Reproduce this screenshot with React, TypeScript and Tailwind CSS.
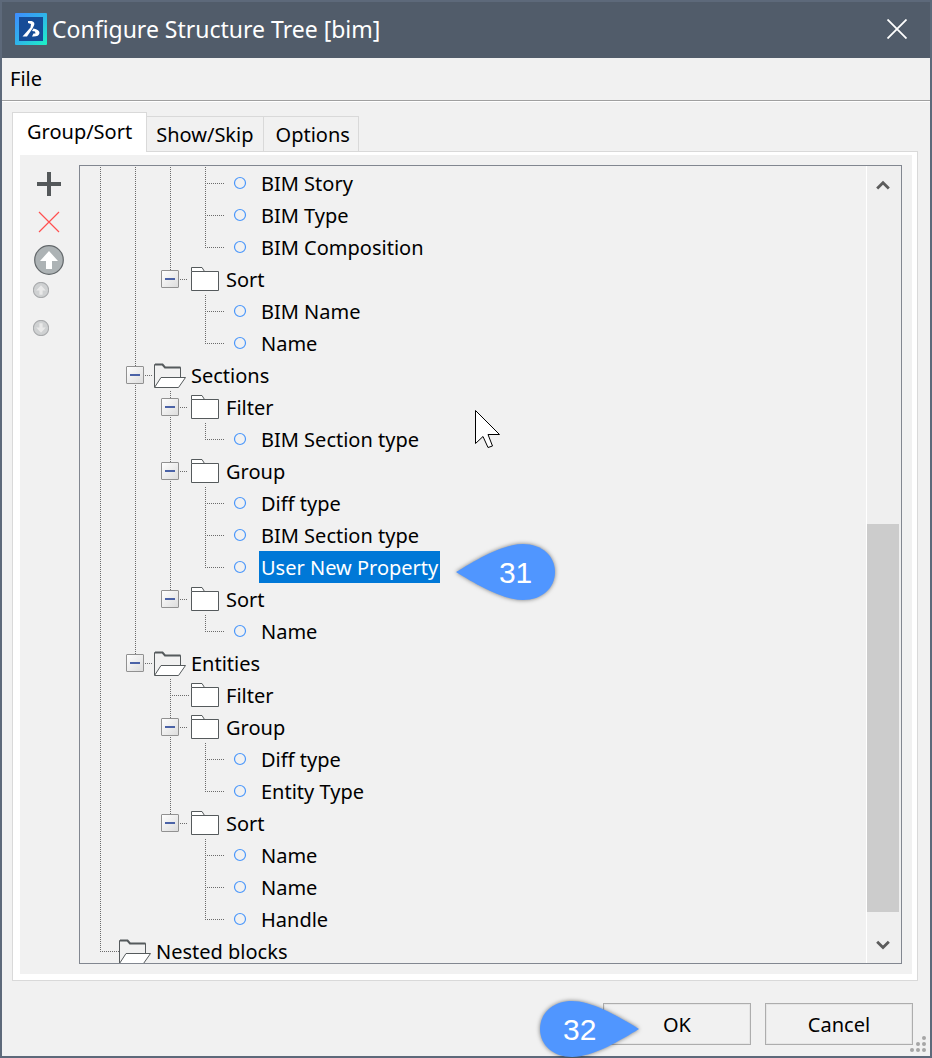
import { useState } from "react";

type Icon = "leaf" | "folder" | "open";

interface Row {
  // one character per indent column:
  // "|" line, "T" tee, "L" corner, "B" box with line going on, "b" last box, " " empty
  guides: string;
  icon: Icon;
  label: string;
  callout?: string;
}

const rows: Row[] = [
  { guides: "|||T", icon: "leaf", label: "BIM Story" },
  { guides: "|||T", icon: "leaf", label: "BIM Type" },
  { guides: "|||L", icon: "leaf", label: "BIM Composition" },
  { guides: "||b", icon: "folder", label: "Sort" },
  { guides: "|| T", icon: "leaf", label: "BIM Name" },
  { guides: "|| L", icon: "leaf", label: "Name" },
  { guides: "|B", icon: "open", label: "Sections" },
  { guides: "||B", icon: "folder", label: "Filter" },
  { guides: "|||L", icon: "leaf", label: "BIM Section type" },
  { guides: "||B", icon: "folder", label: "Group" },
  { guides: "|||T", icon: "leaf", label: "Diff type" },
  { guides: "|||T", icon: "leaf", label: "BIM Section type" },
  { guides: "|||L", icon: "leaf", label: "User New Property", callout: "31" },
  { guides: "||b", icon: "folder", label: "Sort" },
  { guides: "|| L", icon: "leaf", label: "Name" },
  { guides: "|b", icon: "open", label: "Entities" },
  { guides: "| T", icon: "folder", label: "Filter" },
  { guides: "| B", icon: "folder", label: "Group" },
  { guides: "| |T", icon: "leaf", label: "Diff type" },
  { guides: "| |L", icon: "leaf", label: "Entity Type" },
  { guides: "| b", icon: "folder", label: "Sort" },
  { guides: "|  T", icon: "leaf", label: "Name" },
  { guides: "|  T", icon: "leaf", label: "Name" },
  { guides: "|  L", icon: "leaf", label: "Handle" },
  { guides: "L", icon: "open", label: "Nested blocks" },
];

const Guide = ({ kind }: { kind: string }) => {
  const isBox = kind === "B" || kind === "b";
  const toBottom = kind === "|" || kind === "T" || kind === "B";
  const drawing = (
    <svg className="block h-8 w-[35px] overflow-visible" viewBox="0 0 35 32" fill="none">
      {kind !== " " && (
        <path
          d={toBottom ? "M17.5 0V32" : "M17.5 0V17"}
          stroke="#6b6b6b"
          strokeDasharray="1 1"
          shapeRendering="crispEdges"
        />
      )}
      {kind !== " " && kind !== "|" && (
        <path
          d={isBox ? "M18 16.5H35" : "M18 16.5H37"}
          stroke="#6b6b6b"
          strokeDasharray="1 1"
          strokeDashoffset="1"
          shapeRendering="crispEdges"
        />
      )}
      {isBox && (
        <>
          <defs>
            <linearGradient id="boxFill" x1="0" y1="0" x2="1" y2="1">
              <stop offset="0" stopColor="#ffffff" />
              <stop offset="1" stopColor="#dcdcdc" />
            </linearGradient>
          </defs>
          <rect x="8.5" y="7.5" width="17" height="17" rx="0.5" fill="url(#boxFill)" stroke="#919191" />
          <path d="M12 16H22" stroke="#4b63a7" strokeWidth="2" />
        </>
      )}
    </svg>
  );

  if (isBox) {
    return (
      <button aria-label="Collapse" className="shrink-0">
        {drawing}
      </button>
    );
  }
  return <span className="shrink-0">{drawing}</span>;
};

const NodeIcon = ({ icon }: { icon: Icon }) => (
  <svg className="block h-8 w-[35px] shrink-0" viewBox="0 0 35 32" fill="none">
    {icon === "leaf" && <circle cx="17" cy="16" r="5.5" stroke="#4a97fb" strokeWidth="1.2" />}
    {icon === "folder" && (
      <g stroke="#555a5c" fill="#fff">
        <path d="M3.5 8.5V4.5H14L16.5 8.5" />
        <path d="M3.5 8.5H30.5V27.5H3.5Z" />
      </g>
    )}
    {icon === "open" && (
      <g stroke="#555a5c">
        <path d="M1.5 28V5.5H9.5L12 8.5H27.5V18.5" />
        <path d="M2 5.5H9.5L12 8.5H27.5" strokeWidth="2" />
        <path d="M1.5 28.5L8 18.5H32.5L25.5 28.5Z" fill="#fff" />
      </g>
    )}
  </svg>
);

const Callout = ({ text, flip = false }: { text: string; flip?: boolean }) => (
  <span className="relative block h-[58px] w-[100px]">
    <svg className="absolute inset-0 h-full w-full overflow-visible drop-shadow-[0_0_2px_rgba(0,0,0,0.5)]" viewBox="0 0 100 58">
      <path
        d="M0 29C18 18 46 1 67 1C86 1 99 13 99 29C99 45 86 57 67 57C46 57 18 40 0 29Z"
        fill="#5096ff"
        transform={flip ? "matrix(-1 0 0 1 100 0)" : undefined}
      />
    </svg>
    <span
      className={`absolute inset-y-0 flex items-center font-['Liberation_Sans',sans-serif] text-[30px] text-white ${
        flip ? "left-6" : "right-6"
      }`}
    >
      {text}
    </span>
  </span>
);

const RoundArrow = ({ down = false, large = false }: { down?: boolean; large?: boolean }) => (
  <svg className={large ? "size-[30px]" : "size-4"} viewBox="0 0 30 30">
    <circle cx="15" cy="15" r="14.3" fill={large ? "#adb3b5" : "#cfd1d2"} stroke={large ? "#62676a" : "#a9abad"} strokeWidth={large ? 1.2 : 2} />
    <path
      d="M15 6L24 16H18V24H12V16H6Z"
      fill={large ? "#fff" : "#e9e9e9"}
      transform={down ? "rotate(180 15 15)" : undefined}
    />
  </svg>
);

const Toolbar = () => (
  <div className="flex w-[59px] shrink-0 flex-col items-start">
    <button aria-label="Add" className="flex h-[38px] w-[58px] items-center justify-center">
      <svg className="size-6" viewBox="0 0 24 24">
        <path d="M0 12H24M12 0V24" stroke="#54585a" strokeWidth="4" />
      </svg>
    </button>
    <button aria-label="Delete" className="flex h-[38px] w-[58px] items-center justify-center">
      <svg className="size-[22px]" viewBox="0 0 22 22">
        <path d="M1 1L21 21M21 1L1 21" stroke="#ff5050" strokeWidth="1.2" />
      </svg>
    </button>
    <button aria-label="Move to parent" className="flex h-[38px] w-[58px] items-center justify-center">
      <RoundArrow large />
    </button>
    <button aria-label="Move up" disabled className="ml-2.5 flex size-[22px] items-center justify-center">
      <RoundArrow />
    </button>
    <button aria-label="Move down" disabled className="mt-4 ml-2.5 flex size-[22px] items-center justify-center">
      <RoundArrow down />
    </button>
  </div>
);

const Scrollbar = () => (
  <div className="flex w-[35px] shrink-0 flex-col border-l border-white bg-[#efefef] pr-0.5">
    <button aria-label="Scroll up" className="flex h-[38px] items-center justify-center">
      <svg className="size-3.5" viewBox="0 0 12 12" fill="none">
        <path d="M1 9L6 4L11 9" stroke="#5c5c5c" strokeWidth="2.4" />
      </svg>
    </button>
    <div className="grow-[320]" />
    <div className="grow-[388] bg-[#cccccc]" />
    <div className="grow-[13]" />
    <button aria-label="Scroll down" className="flex h-[38px] items-center justify-center">
      <svg className="size-3.5" viewBox="0 0 12 12" fill="none">
        <path d="M1 4L6 9L11 4" stroke="#5c5c5c" strokeWidth="2.4" />
      </svg>
    </button>
  </div>
);

const Tree = () => {
  const [selected, setSelected] = useState(12);

  return (
    <div className="relative flex min-h-0 flex-1 border border-[#828790]">
      <ul className="min-h-0 flex-1 overflow-hidden pt-px pl-[3px]">
        {rows.map((row, index) => (
          <li key={index} className="flex h-8">
            {row.guides.split("").map((kind, i) => (
              <Guide key={i} kind={kind} />
            ))}
            <NodeIcon icon={row.icon} />
            <div className="relative ml-px">
              <button
                onClick={() => setSelected(index)}
                className={`h-8 px-0.5 pt-0.5 leading-[30px] whitespace-nowrap ${selected === index ? "bg-[#0078d7] text-white" : ""}`}
              >
                {row.label}
              </button>
              {row.callout && (
                <div className="pointer-events-none absolute top-1/2 left-full ml-4 -translate-y-6">
                  <Callout text={row.callout} />
                </div>
              )}
            </div>
          </li>
        ))}
      </ul>
      <Scrollbar />
      {/* Mouse pointer */}
      <svg className="pointer-events-none absolute top-[244px] left-[395px] h-10 w-[26px]" viewBox="0 0 26 40">
        <path d="M0.5 0.5V33.5L8 26.5L13 37.5L17.5 36L13 24.5H24.5Z" fill="#fff" stroke="#000" />
      </svg>
    </div>
  );
};

const tabs = ["Group/Sort", "Show/Skip", "Options"];

export default function App() {
  const [activeTab, setActiveTab] = useState(tabs[0]);

  return (
    <div className="flex h-screen flex-col border-2 border-[#5d697a] bg-[#f1f1f1] font-['Noto_Sans',sans-serif] text-[20px] text-black">
      {/* Title bar */}
      <header className="flex h-14 shrink-0 items-center bg-[#515c6a] pb-0.5 pl-[13px] text-white">
        <svg className="size-8" viewBox="0 0 32 32" fill="none">
          <defs>
            <linearGradient id="logo" x1="0" y1="0" x2="1" y2="1">
              <stop offset="0" stopColor="#3f8cff" />
              <stop offset="0.5" stopColor="#2fb4ea" />
              <stop offset="1" stopColor="#1cf5c4" />
            </linearGradient>
          </defs>
          <rect width="32" height="32" rx="1" fill="url(#logo)" />
          <rect x="4" y="4" width="24" height="24" fill="#164c97" />
          <path d="M13 8H16.5Q20.5 9 19 12.5L17.5 15.5L12 23.5H7.5L15.5 14.5L16 11L13 10Z" fill="#fff" />
          <path d="M18.5 15.5Q24.5 16.5 24.5 20Q24 24 17 23.5L18.5 20.5H20.5L20 18.5L17 18Z" fill="#fff" />
        </svg>
        <h1 className="ml-[5px] flex-1 text-[23px]">Configure Structure Tree [bim]</h1>
        <button aria-label="Close" className="flex h-full w-[66px] items-center justify-center">
          <svg className="size-5" viewBox="0 0 20 20">
            <path d="M0.5 0.5L19.5 19.5M19.5 0.5L0.5 19.5" stroke="#fff" strokeWidth="1.8" />
          </svg>
        </button>
      </header>

      {/* Menu bar */}
      <nav className="flex h-[43px] shrink-0 items-center border-b border-[#a0a0a0] px-2 shadow-[0_1px_0_#fff]">
        <button>File</button>
      </nav>

      <main className="flex min-h-0 flex-1 flex-col pt-[11px] pr-3 pl-2.5">
        <div className="flex items-end">
          {tabs.map((tab) => (
            <button
              key={tab}
              onClick={() => setActiveTab(tab)}
              className={
                activeTab === tab
                  ? "relative z-10 -mb-px h-10 border border-b-0 border-[#d9d9d9] bg-white px-[14px] pb-0.5"
                  : "h-[35px] border-t border-r border-[#d9d9d9] pt-0.5 pr-[9px] pl-[9px] last:pl-3 last:pr-2"
              }
            >
              {tab}
            </button>
          ))}
        </div>
        <div className="flex min-h-0 flex-1 border border-[#d9d9d9] bg-white pt-[3px] pr-[5px] pb-1.5 pl-[7px]">
          <div className="flex min-h-0 flex-1 bg-[#f1f1f1] py-2.5 pr-2.5">
            <Toolbar />
            <Tree />
          </div>
        </div>
      </main>

      <footer className="relative flex shrink-0 justify-end gap-[14px] pt-[22px] pr-[17px] pb-[11px]">
        <div className="relative">
          <button className="h-[42px] w-[148px] border border-[#adadad] pt-0.5 shadow-[inset_0_0_0_1px_#e6e6e6]">OK</button>
          <div className="pointer-events-none absolute -top-[3px] right-[112px]">
            <Callout text="32" flip />
          </div>
        </div>
        <button className="h-[42px] w-[148px] border border-[#adadad] pt-0.5 shadow-[inset_0_0_0_1px_#e6e6e6]">Cancel</button>
        {/* Resize grip */}
        <svg className="absolute right-1 bottom-1 size-4" viewBox="0 0 16 16" fill="#a6a6a6">
          <circle cx="14" cy="2" r="2" />
          <circle cx="8" cy="8" r="2" />
          <circle cx="14" cy="8" r="2" />
          <circle cx="2" cy="14" r="2" />
          <circle cx="8" cy="14" r="2" />
          <circle cx="14" cy="14" r="2" />
        </svg>
      </footer>
    </div>
  );
}
